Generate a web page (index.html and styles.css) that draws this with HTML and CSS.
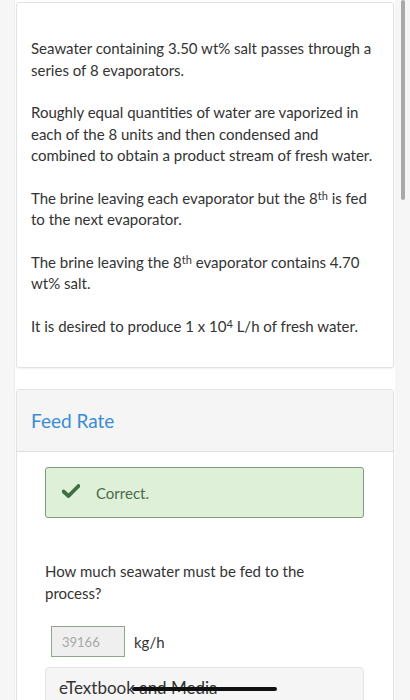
FILE: index.html
```html
<!DOCTYPE html>
<html lang="en">
<head>
    <meta charset="UTF-8">
    <meta name="viewport" content="width=device-width, initial-scale=1.0">
    <title>Feed Rate - Evaporators</title>
    <link rel="stylesheet" href="styles.css">
</head>
<body>
    <div class="page">
        <main class="column">
            <!-- Problem statement -->
            <section class="card intro">
                <p>Seawater containing 3.50 wt% salt passes through a series of 8 evaporators.</p>
                <p>Roughly equal quantities of water are vaporized in each of the 8 units and then condensed and combined to obtain a product stream of fresh water.</p>
                <p>The brine leaving each evaporator but the 8<sup>th</sup> is fed to the next evaporator.</p>
                <p>The brine leaving the 8<sup>th</sup> evaporator contains 4.70 wt% salt.</p>
                <p>It is desired to produce 1 x 10<sup>4</sup> L/h of fresh water.</p>
            </section>

            <!-- Part: Feed Rate -->
            <section class="card part">
                <div class="part-header">
                    <h2>Feed Rate</h2>
                </div>
                <div class="part-body">
                    <div class="alert-correct">
                        <svg class="check" width="18" height="14" viewBox="0 0 18 14">
                            <path d="M1.5 7.5 L6.5 12 L16.5 2" fill="none" stroke="#3f6e40" stroke-width="3.8" stroke-linecap="round" stroke-linejoin="round"/>
                        </svg>
                        <span>Correct.</span>
                    </div>
                    <p class="question">How much seawater must be fed to the process?</p>
                    <div class="answer-row">
                        <input class="answer" type="text" value="39166" disabled>
                        <span class="unit">kg/h</span>
                    </div>
                    <div class="resources">
                        eTextbook and Media
                        <span class="scribble"></span>
                    </div>
                </div>
            </section>
        </main>
        <div class="scrollbar"></div>
    </div>
</body>
</html>
```

FILE: styles.css
```css
/* General */
body {
    margin: 0;
    font-family: Lato, "Open Sans", sans-serif;
    background-color: #f6f6f6;
    color: #333;
    overflow: hidden;
}

.page {
    display: flex;
    padding-left: 14px;
    height: 700px;
}

.column {
    width: 378px;
    padding: 2px 1px 0 1px;
    background-color: #fff;
    border-left: 1px solid #ececec;
    display: flex;
    flex-direction: column;
    gap: 21px;
}

.scrollbar {
    width: 4px;
    height: 200px;
    margin-left: 6px;
    background-color: #a9a9a9;
    border-radius: 2px;
}

/* Cards */
.card {
    border: 1px solid #e2e2e2;
    border-radius: 3px;
    background-color: #fff;
    box-shadow: 0 1px 2px rgba(0, 0, 0, 0.06);
}

.intro {
    padding: 35px 15px 30px 14px;
    font-size: 15px;
    line-height: 21.5px;
}

.intro p {
    margin: 0 0 21px 0;
}

.intro p:last-child {
    margin-bottom: 0;
}

sup {
    font-size: 11px;
    line-height: 0;
    vertical-align: 4px;
}

/* Part */
.part-header {
    background-color: #f5f5f5;
    border-bottom: 1px solid #dedede;
    height: 61px;
    display: flex;
    align-items: center;
    padding-left: 14px;
}

.part-header h2 {
    margin: 0;
    font-size: 19px;
    font-weight: normal;
    color: #3a8dd0;
}

.part-body {
    padding: 15px 29px 0 28px;
}

.alert-correct {
    display: flex;
    align-items: center;
    height: 49px;
    padding-left: 16px;
    background-color: #dff0d8;
    border: 1px solid #7f9c7e;
    border-radius: 3px;
    color: #4b6a4b;
    font-size: 15px;
}

.alert-correct .check {
    margin-right: 16px;
    margin-top: -3px;
}

.question {
    margin: 43px 0 0 0;
    font-size: 15px;
    line-height: 21.5px;
    width: 280px;
}

.answer-row {
    display: flex;
    align-items: center;
    margin: 22px 0 0 6px;
    gap: 9px;
}

.answer {
    box-sizing: border-box;
    width: 74px;
    height: 31px;
    padding: 0 0 0 10px;
    margin: 0;
    border: 1px solid #8ea68c;
    background-color: #efefef;
    color: #a8a8a8;
    font-family: Lato, sans-serif;
    font-size: 13px;
}

.unit {
    font-size: 15px;
    color: #333;
}

.resources {
    position: relative;
    margin-top: 10px;
    height: 40px;
    padding: 9px 0 0 13px;
    box-sizing: border-box;
    background-color: #f5f5f5;
    border: 1px solid #e4e4e4;
    border-radius: 4px;
    font-size: 17px;
    color: #333;
}

.scribble {
    position: absolute;
    left: 86px;
    top: 19px;
    width: 145px;
    height: 4px;
    background-color: #111;
    border-radius: 2px;
}
```
